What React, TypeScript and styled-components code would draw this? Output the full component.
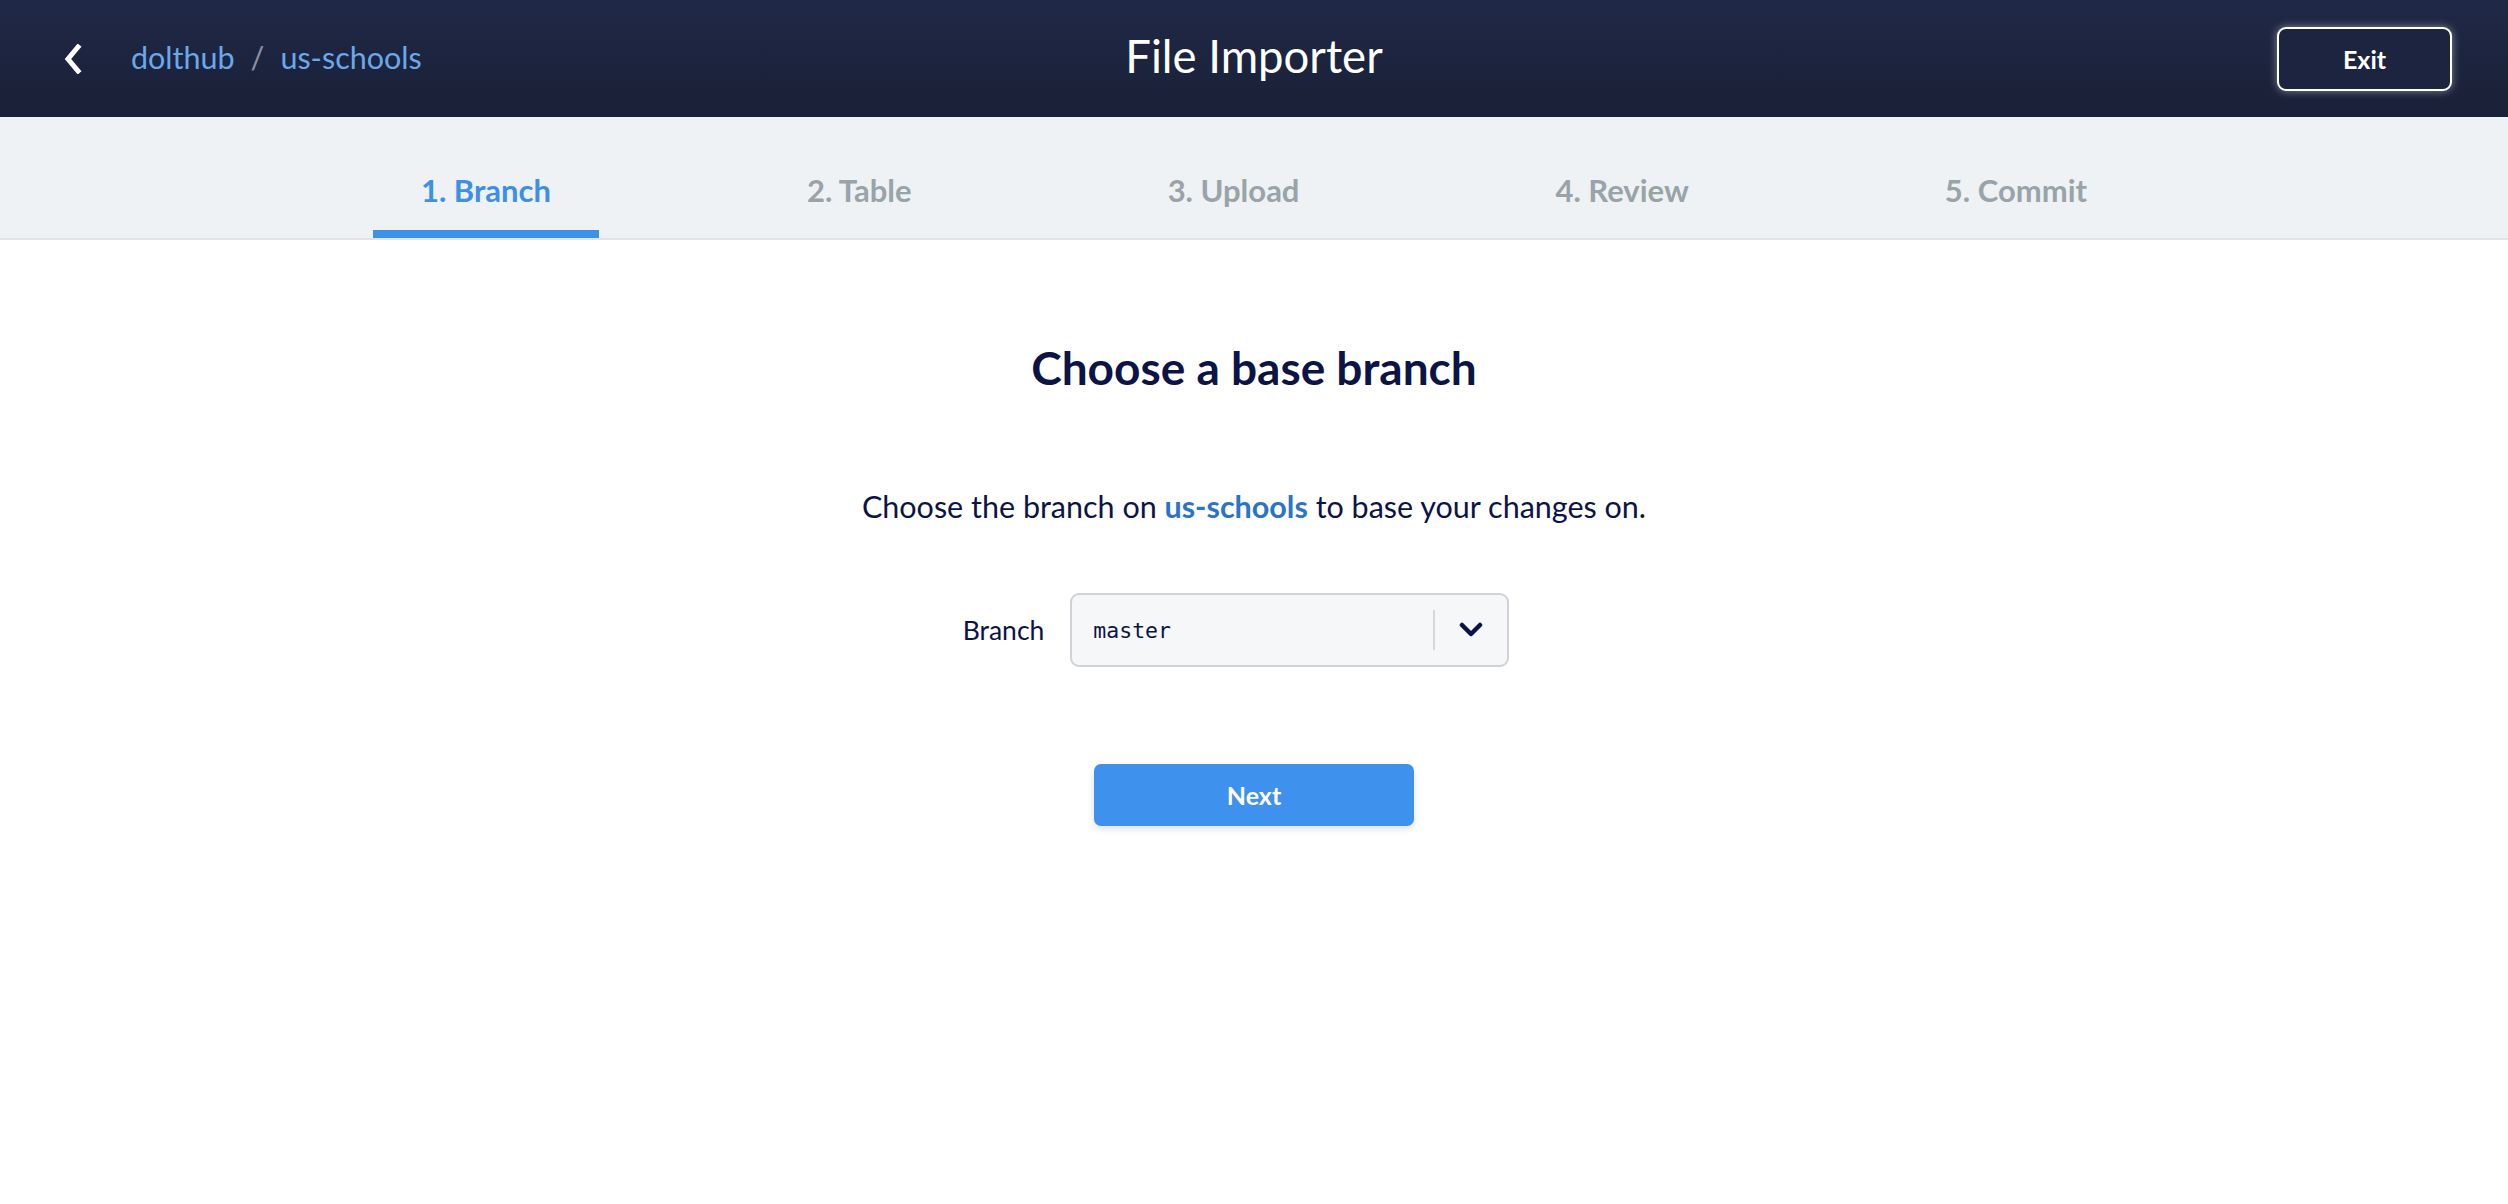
import React from "react";
import styled, { createGlobalStyle } from "styled-components";

const GlobalStyle = createGlobalStyle`
  html, body { margin: 0; padding: 0; background: #ffffff; }
  body { font-family: Lato, "Open Sans", sans-serif; color: #0c1445; }
  * { box-sizing: border-box; }
`;

const Page = styled.div`
  min-height: 1204px;
  background: #ffffff;
`;

const Header = styled.header`
  height: 117px;
  background: linear-gradient(180deg, #1f2847 0%, #1a2036 100%);
  display: grid;
  grid-template-columns: 1fr auto 1fr;
  align-items: center;
  padding: 0 56px;
`;

const Left = styled.div`
  display: flex;
  align-items: center;
  padding-left: 7px;
`;

const BackButton = styled.button`
  background: none;
  border: none;
  padding: 0;
  margin: 0 48px 0 0;
  width: 20px;
  height: 30px;
  display: flex;
  align-items: center;
  justify-content: center;
  cursor: pointer;
`;

const Crumbs = styled.nav`
  display: flex;
  align-items: center;
  gap: 16px;
  font-size: 30.5px;
  line-height: 36px;
  margin-top: -4px;
`;

const Crumb = styled.a`
  color: #6aa8ec;
  text-decoration: none;
`;

const Slash = styled.span`
  color: #8a93a6;
`;

const Title = styled.h1`
  margin: -6px 0 0;
  color: #ffffff;
  font-weight: 400;
  font-size: 45.5px;
  line-height: 56px;
`;

const Right = styled.div`
  display: flex;
  justify-content: flex-end;
`;

const ExitButton = styled.button`
  width: 175px;
  height: 64px;
  border: 2px solid #ffffff;
  border-radius: 9px;
  background: #1c2440;
  color: #ffffff;
  font-family: Lato, sans-serif;
  font-weight: 700;
  font-size: 25px;
  box-shadow: 0 0 8px rgba(255, 255, 255, 0.45);
  cursor: pointer;
`;

const TabsBar = styled.div`
  height: 123px;
  background: #eef2f5;
  border-bottom: 2px solid #e1e4e7;
  display: flex;
  justify-content: center;
`;

const TabList = styled.ul`
  list-style: none;
  margin: 0;
  padding: 0;
  display: flex;
  gap: 160px;
  height: 121px;
`;

const Tab = styled.li<{ $active?: boolean }>`
  height: 121px;
  padding: 0 48px 22px;
  display: flex;
  align-items: flex-end;
  border-bottom: 8px solid ${(p) => (p.$active ? "#3d91ea" : "transparent")};
  color: ${(p) => (p.$active ? "#3d8fe8" : "#9aa3a8")};
  font-weight: 700;
  font-size: 31px;
  line-height: 36px;
  white-space: nowrap;
`;

const Main = styled.main`
  display: flex;
  flex-direction: column;
  align-items: center;
  padding-top: 100px;
`;

const Heading = styled.h2`
  margin: 0;
  font-size: 46px;
  line-height: 56px;
  font-weight: 700;
  color: #0c1445;
`;

const Lead = styled.p`
  margin: 90px 0 0;
  font-size: 30.5px;
  line-height: 40px;
  color: #0c1445;
`;

const RepoLink = styled.a`
  color: #2a74c9;
  font-weight: 700;
  text-decoration: none;
`;

const FieldRow = styled.div`
  margin-top: 67px;
  display: flex;
  align-items: center;
  gap: 26px;
  margin-left: -36px;
`;

const Label = styled.label`
  font-size: 26.5px;
  color: #0c1445;
`;

const Select = styled.div`
  width: 439px;
  height: 74px;
  border: 2px solid #cfd3d7;
  border-radius: 9px;
  background: #f5f7f9;
  display: flex;
  align-items: center;
`;

const SelectValue = styled.span`
  flex: 1;
  padding-left: 21px;
  font-family: "DejaVu Sans Mono", "Liberation Mono", monospace;
  font-size: 21.5px;
  color: #0c1445;
`;

const Divider = styled.span`
  width: 2px;
  height: 40px;
  background: #d4d7db;
`;

const Indicator = styled.span`
  width: 72px;
  display: flex;
  align-items: center;
  justify-content: center;
`;

const NextButton = styled.button`
  margin-top: 97px;
  width: 320px;
  height: 62px;
  border: none;
  border-radius: 7px;
  background: #3e91ec;
  color: #ffffff;
  font-family: Lato, sans-serif;
  font-weight: 700;
  font-size: 25px;
  box-shadow: 0 3px 6px rgba(0, 0, 0, 0.12);
  cursor: pointer;
`;

const tabs = ["1. Branch", "2. Table", "3. Upload", "4. Review", "5. Commit"];

export default function App() {
  return (
    <Page>
      <GlobalStyle />
      <Header>
        <Left>
          <BackButton aria-label="Back">
            <svg width="20" height="30" viewBox="0 0 20 30">
              <polyline
                points="15,3 5,15 15,27"
                fill="none"
                stroke="#ffffff"
                strokeWidth="5"
                strokeLinecap="square"
                strokeLinejoin="miter"
              />
            </svg>
          </BackButton>
          <Crumbs>
            <Crumb href="#">dolthub</Crumb>
            <Slash>/</Slash>
            <Crumb href="#">us-schools</Crumb>
          </Crumbs>
        </Left>
        <Title>File Importer</Title>
        <Right>
          <ExitButton>Exit</ExitButton>
        </Right>
      </Header>
      <TabsBar>
        <TabList>
          {tabs.map((t, i) => (
            <Tab key={t} $active={i === 0}>
              {t}
            </Tab>
          ))}
        </TabList>
      </TabsBar>
      <Main>
        <Heading>Choose a base branch</Heading>
        <Lead>
          Choose the branch on <RepoLink href="#">us-schools</RepoLink> to base your changes on.
        </Lead>
        <FieldRow>
          <Label>Branch</Label>
          <Select>
            <SelectValue>master</SelectValue>
            <Divider />
            <Indicator>
              <svg width="24" height="16" viewBox="0 0 24 16">
                <polyline
                  points="3,3 12,12 21,3"
                  fill="none"
                  stroke="#0c1445"
                  strokeWidth="4.5"
                  strokeLinecap="round"
                  strokeLinejoin="round"
                />
              </svg>
            </Indicator>
          </Select>
        </FieldRow>
        <NextButton>Next</NextButton>
      </Main>
    </Page>
  );
}
